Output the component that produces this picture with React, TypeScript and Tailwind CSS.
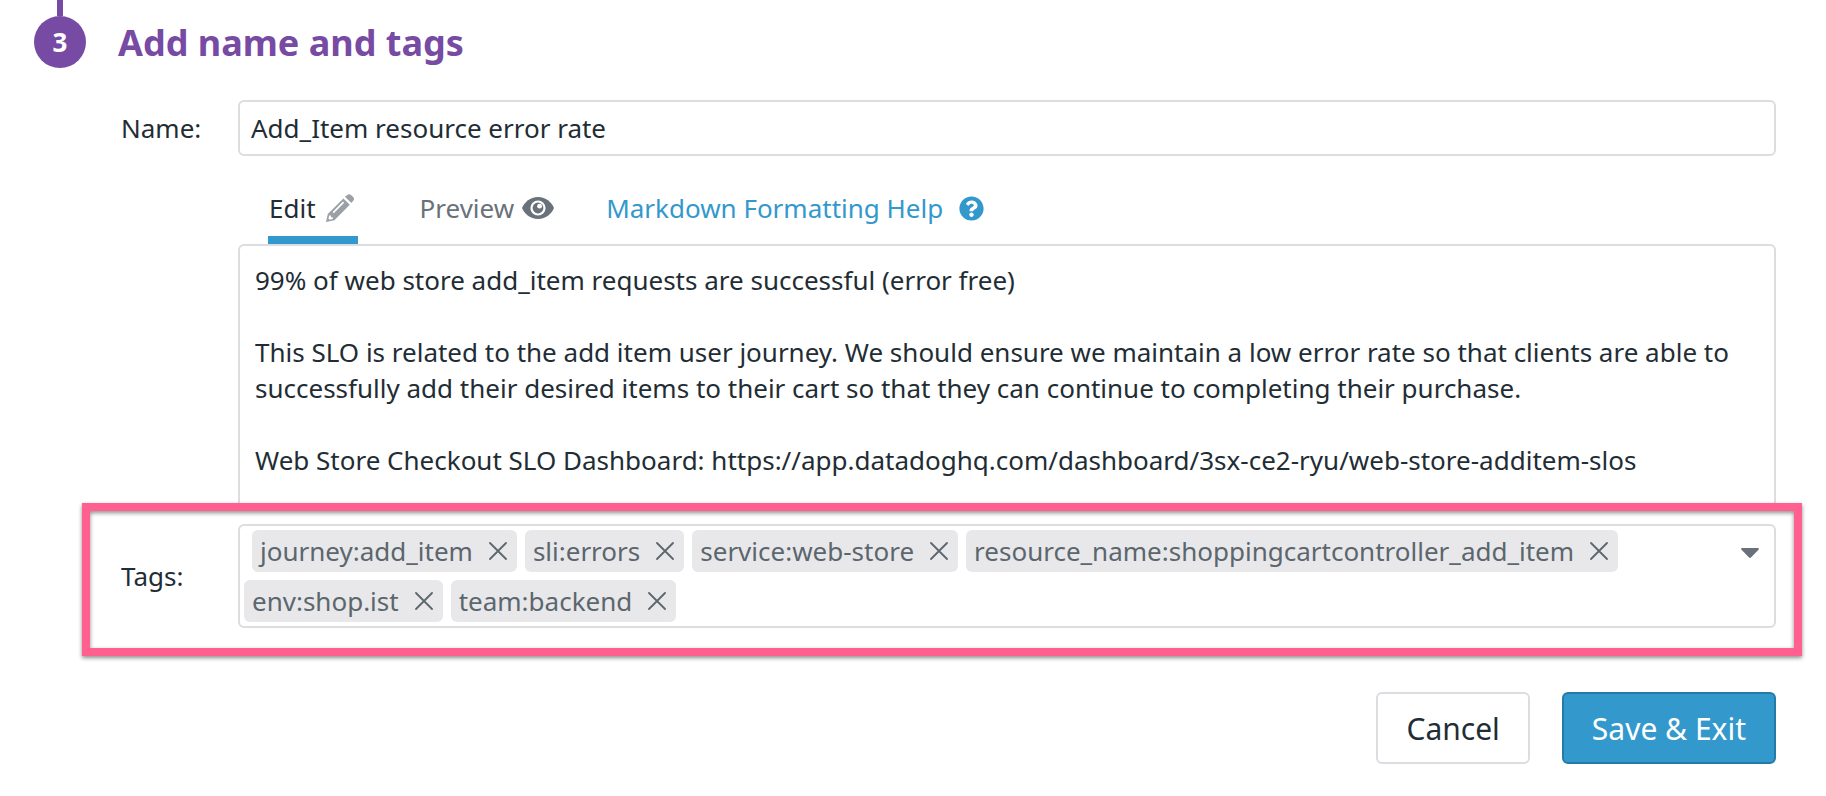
import { useState } from "react";
import { FaQuestionCircle } from "react-icons/fa";

const initialTags = [
  "journey:add_item",
  "sli:errors",
  "service:web-store",
  "resource_name:shoppingcartcontroller_add_item",
  "env:shop.ist",
  "team:backend",
];

const initialDescription = `99% of web store add_item requests are successful (error free)

This SLO is related to the add item user journey. We should ensure we maintain a low error rate so that clients are able to successfully add their desired items to their cart so that they can continue to completing their purchase.

Web Store Checkout SLO Dashboard: https://app.datadoghq.com/dashboard/3sx-ce2-ryu/web-store-additem-slos`;

function PencilIcon() {
  return (
    <svg className="size-7" viewBox="0 0 28 28" fill="#9aa0a5" aria-hidden="true">
      <path d="M19 2.800 21.400.900Q23.200-.600 25 .900L27.200 3.100Q28.800 4.900 27.200 6.700L25.300 9.100Z" />
      <path
        fillRule="evenodd"
        d="M17.400 4.400 23.800 10.800 8.400 26.200 0 28 1.800 20ZM17 7.600 6.600 18 7.800 19.200 18.200 8.800ZM3.200 21.400 2.400 24.400 3.800 25.700 6.800 24.900V23.200H5V21.400Z"
      />
    </svg>
  );
}

function EyeIcon() {
  return (
    <svg className="h-[22px] w-8" viewBox="0 0 32 22" aria-hidden="true">
      <path d="M16 0C24 0 29.4 5.2 32 11 29.4 16.8 24 22 16 22S2.600 16.800 0 11C2.600 5.200 8 0 16 0Z" fill="#69727a" />
      <circle cx="16" cy="11" r="7.600" fill="#fff" />
      <circle cx="16" cy="11" r="5.400" fill="#69727a" />
      <circle cx="17.600" cy="9.200" r="2.400" fill="#fff" />
    </svg>
  );
}

function CloseIcon() {
  return (
    <svg className="size-[18px]" viewBox="0 0 18 18" stroke="#5b666d" strokeWidth="1.8" strokeLinecap="round" aria-hidden="true">
      <path d="M1 1 17 17M17 1 1 17" />
    </svg>
  );
}

export default function App() {
  const [name, setName] = useState("Add_Item resource error rate");
  const [description, setDescription] = useState(initialDescription);
  const [tags, setTags] = useState(initialTags);

  return (
    <main className="bg-white font-['Noto_Sans',sans-serif] text-[26px] leading-9 text-[#1f2d35]">
      <header className="flex items-end gap-8 pl-[34px]">
        <div className="flex flex-col items-center">
          <div className="h-4 w-1.5 bg-[#774aa4]" />
          <div className="flex size-[52px] items-center justify-center rounded-full bg-[#774aa4] font-bold text-white">3</div>
        </div>
        <h1 className="pt-0.5 text-4xl leading-[50px] font-bold text-[#774aa4]">Add name and tags</h1>
      </header>

      <form onSubmit={(e) => e.preventDefault()}>
        <div className="mt-8 flex items-center pr-[50px] pl-[121px]">
          <label htmlFor="slo-name" className="w-[117px] shrink-0">Name:</label>
          <input
            id="slo-name"
            value={name}
            onChange={(e) => setName(e.target.value)}
            className="h-14 min-w-0 flex-1 rounded-md border-2 border-[#dcdce1] px-[11px] outline-none"
          />
        </div>

        <div className="pr-[50px] pl-[238px]">
          <div className="flex h-[88px] items-end gap-[52px] pl-[30px]">
            <button type="button" className="mr-2.5 flex h-[70px] items-center gap-2.5 border-b-8 border-[#3399cc] px-px pt-1.5 pr-1">
              Edit <PencilIcon />
            </button>
            <button type="button" className="flex h-[70px] items-center gap-2 border-b-8 border-transparent pt-1.5 text-[#69727a]">
              Preview <EyeIcon />
            </button>
            <a href="#markdown-help" className="flex h-[70px] items-center gap-4 border-b-8 border-transparent pt-1.5 text-[#3399cc]">
              Markdown Formatting Help <FaQuestionCircle className="size-[25px]" />
            </a>
          </div>
          <textarea
            aria-label="Description"
            value={description}
            onChange={(e) => setDescription(e.target.value)}
            className="block h-[259px] w-full resize-none overflow-hidden rounded-t-md border-2 border-b-0 border-[#dcdce1] px-[15px] py-4 outline-none"
          />
        </div>

        <div className="mr-6 ml-[82px] flex items-center border-8 border-[#ff6090] pt-[13px] pr-[18px] pb-5 pl-[31px] shadow-[0_2px_4px_rgba(0,0,0,0.45),inset_0_2px_4px_rgba(0,0,0,0.45)]">
          <label htmlFor="slo-tags" className="w-[117px] shrink-0">Tags:</label>
          <div className="flex min-w-0 flex-1 items-start rounded-md border-2 border-[#dcdce1] p-1">
            <ul className="flex min-w-0 flex-1 flex-wrap gap-2 text-[#5b666d]">
              {tags.map((tag) => (
                <li key={tag} className="flex h-[42px] items-center gap-4 rounded-md bg-[#e8e8ea] pr-2.5 pl-2 first:ml-2">
                  {tag}
                  <button type="button" aria-label={`Remove ${tag}`} onClick={() => setTags(tags.filter((t) => t !== tag))}>
                    <CloseIcon />
                  </button>
                </li>
              ))}
              <li className="min-w-10 flex-1">
                <input id="slo-tags" className="h-[42px] w-full outline-none" />
              </li>
            </ul>
            <button type="button" aria-label="Show tags" className="flex h-[42px] w-10 items-center justify-center pt-1">
              <svg className="h-2.5 w-[18px]" viewBox="0 0 18 10" fill="#69727a" aria-hidden="true">
                <path d="M1 0H17Q18.500 .3 17.500 1.800L10.200 9.300Q9 10.500 7.800 9.300L.5 1.800Q-.5 .3 1 0Z" />
              </svg>
            </button>
          </div>
        </div>

        <div className="mt-9 flex justify-end gap-8 pr-[50px] text-3xl">
          <button type="button" className="h-[72px] rounded-md border-2 border-[#dcdce1] px-7 pt-0.5">Cancel</button>
          <button type="submit" className="h-[72px] rounded-md border-2 border-[#247ba8] bg-[#3399cc] px-7 pt-0.5 text-white">Save &amp; Exit</button>
        </div>
      </form>
    </main>
  );
}
